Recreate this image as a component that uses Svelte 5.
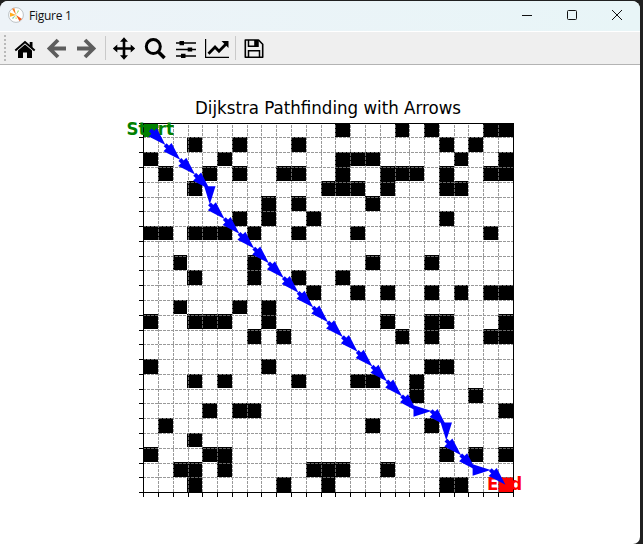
<script>
  const xs = [143,158,173,188,202,217,232,247,261,276,291,306,321,335,350,365,380,395,409,424,439,454,468,483,498,513];
  const ys = [123,137,152,167,182,197,211,226,241,256,270,285,300,315,330,344,359,374,389,403,418,433,448,463,477,492];
  const cellX = xs.map((x, i) => (i === 3 ? 187 : x));
  const cellY = [123,137,152,166,181,196,211,226,240,255,270,285,300,314,329,344,359,374,388,403,418,433,447,462,477,492];
  const walls = [
    [13,17,19,23,24], [3,6,10,20,22], [0,5,13,14,15,21,24],
    [1,4,6,9,10,13,16,17,18,20,23,24], [3,12,13,14,16,20,21],
    [8,10,15], [6,8,11,20], [0,1,3,4,5,7,10,14,23], [],
    [2,7,15,19], [3,7,10,13], [11,14,16,19,21,23,24], [2,6,8],
    [0,3,4,5,8,16,19,20,24], [7,9,17,19,23,24], [], [0,8,19,20],
    [3,5,10,14,15,18], [18,22], [4,6,7,24], [1,15,19], [3],
    [0,4,5,20,22,24], [2,3,5,11,12,13,16], [3,9,12,20,21]
  ];
  const cells = walls.flatMap((row, r) => row.map((c) => ({ r, c })));
  const path = [[0,0],[1,1],[2,2],[3,3],[4,4],[4,5]];
  for (let i = 5; i <= 18; i++) path.push([i, i + 1]);
  path.push([19,19],[20,20],[20,21],[21,22],[22,23],[23,23],[24,24]);
  const px = (c) => 150.7 + c * 14.78;
  const py = (r) => 130.3 + r * 14.77;
  const arrows = path.slice(1).map(([c, r], i) => {
    const [pc, pr] = path[i];
    const dx = px(c) - px(pc), dy = py(r) - py(pr);
    return { x: px(c), y: py(r), len: Math.hypot(dx, dy), angle: Math.atan2(dy, dx) * 180 / Math.PI };
  });
</script>

<div class="desktop">
  <div class="window">
    <header>
      <svg class="logo" width="16" height="16" viewBox="0 0 16 16">
        <circle cx="8" cy="8" r="7.4" fill="#fff" stroke="#aeb4b8" stroke-width=".8"/>
        <path d="M8 8 4 1.800 6.400 1.200Z" fill="#f47b20"/>
        <path d="M8 8 2 5.500 2 9.800Z" fill="#ffae21"/>
        <path d="M8 8 4 11 5 12Z" fill="#75c8b0"/>
        <path d="M8 8 11.400 14 14 12Z" fill="#ee5b1d"/>
        <path d="M8 8 10 3 11 4Z" fill="#9ddd76"/>
        <path d="M8 8 7.300 12 9 12Z" fill="#dff27c"/>
      </svg>
      <span class="name">Figure 1</span>
      <div class="controls">
        <svg width="12" height="12" viewBox="0 0 12 12"><path d="M1 6.500H11"/></svg>
        <svg width="12" height="12" viewBox="0 0 12 12"><rect x="1.500" y="1.500" width="9" height="9" rx="1"/></svg>
        <svg width="12" height="12" viewBox="0 0 12 12"><path d="M1 1 11 11M11 1 1 11"/></svg>
      </div>
    </header>
    <nav>
      <svg width="270" height="32" viewBox="0 32 270 32">
        <path d="M5 35V62" stroke="#b9b9b9" stroke-width="2" stroke-dasharray="2 2"/>
        <path d="M105.500 36V60M235.500 36V60" stroke="#c9c9c9"/>
        <path d="M15.300 50.500 25 42 34.700 50.500" fill="none" stroke="#000" stroke-width="2"/>
        <path d="M29.700 42H32.500V48L29.700 45.500ZM18 50.500 25 44.500 32 50.500V58H27V52.500H23V58H18Z"/>
        <g fill="none" stroke="#5d5d5d" stroke-width="3.800"><path d="M58 40 49.500 48.500 58 57M50 48.500H66"/><path d="M85 40 93.500 48.500 85 57M77 48.500H93"/></g>
        <path d="M124 40V57M115.500 48.500H132.500" stroke="#000" stroke-width="2.600"/>
        <path d="M124 37.300 128 41.800H120ZM124 59.700 128 55.200H120ZM112.800 48.500 117.300 44.500V52.500ZM135.200 48.500 130.700 44.500V52.500Z"/>
        <circle cx="153.300" cy="46.600" r="7" fill="none" stroke="#000" stroke-width="3"/>
        <path d="M158 51.500 164.500 58" stroke="#000" stroke-width="3.600"/>
        <path d="M176 43H196M176 49.500H196M176 56H196" stroke="#000" stroke-width="1.500"/>
        <path d="M179.500 41H184V45.200H179.500ZM187.700 47.400H192.200V51.600H187.700ZM181 53.800H185.500V58H181Z"/>
        <path d="M205.600 39V57.300H229" fill="none" stroke="#000" stroke-width="1.200"/>
        <path d="M208.500 53.700 215 47 219 51.300 226.500 43.500" fill="none" stroke="#000" stroke-width="2.800"/>
        <path d="M221.500 41H228.500V48Z"/>
        <path d="M245.300 40H258.500L262.700 44.200V57.300H245.300Z" fill="none" stroke="#000" stroke-width="1.600" stroke-linejoin="round"/>
        <path d="M248.500 40V46.300H258V40M248.500 57V50.700H259.500V57" fill="none" stroke="#000" stroke-width="1.500"/>
        <path d="M254.200 40H258V46H254.200Z"/>
      </svg>
    </nav>
    <main>
      <svg width="640" height="479" viewBox="0 65 640 479">
        <text class="title" transform="translate(328 114) scale(1 1.080)" text-anchor="middle" textLength="266">Dijkstra Pathfinding with Arrows</text>
        <g shape-rendering="crispEdges">
          <rect x="143" y="123" width="15" height="14" fill="#008000"/>
          <rect x="498" y="477" width="15" height="15" fill="#f00"/>
          {#each cells as { r, c }}
            <rect x={cellX[c]} y={cellY[r]} width={cellX[c + 1] - cellX[c]} height={cellY[r + 1] - cellY[r]}/>
          {/each}
          <g class="grid">
            {#each xs.slice(1, -1) as x}<path d={`M${x + .5} 492V123`}/>{/each}
            {#each ys.slice(1, -1) as y}<path d={`M143 ${y + .5}H513`}/>{/each}
          </g>
          <g stroke="#000">
            {#each xs as x}<path d={`M${x + .5} 492V497`}/>{/each}
            {#each ys as y}<path d={`M139 ${y + .5}H143`}/>{/each}
            <rect x="143.500" y="123.500" width="370" height="369" fill="none"/>
          </g>
        </g>
        <text class="mark" transform="translate(150.300 135) scale(1 1.070)" fill="#008000" text-anchor="middle">Start</text>
        <text class="mark" transform="translate(504.700 490) scale(1 1.070)" fill="#f00" text-anchor="middle">End</text>
        {#each arrows as a}
          <g transform={`translate(${a.x} ${a.y}) rotate(${a.angle})`} fill="#00f">
            <path d="M0 0-18-5.700V5.700Z"/>
            {#if a.len > 18}<path d={`M${-a.len - .5}-2H-16V2H${-a.len - .5}Z`}/>{/if}
          </g>
        {/each}
      </svg>
    </main>
  </div>
</div>

<style>
  .desktop { width: 643px; height: 544px; box-sizing: border-box; padding: 1px 3px 0 0; background: #202020; overflow: hidden; }
  .window { height: 543px; display: flex; flex-direction: column; background: #fff; border-radius: 8px 8px 7px 0; overflow: hidden; }
  header { height: 28px; display: flex; align-items: center; padding: 0 17px 2px 8px; background: linear-gradient(90deg, #edf3f8, #e8f5f7); border-bottom: 1px solid #fff; }
  .name { font: 12px "Open Sans", "Noto Sans", sans-serif; color: #111; margin-left: 5px; letter-spacing: -.25px; }
  .controls { margin-left: auto; display: flex; gap: 33.5px; }
  .controls svg { fill: none; stroke: #111; stroke-width: 1; }
  .controls svg:first-child { margin-right: -.5px; }
  nav { height: 32px; background: #efefef; border-bottom: 1px solid #b3b3b3; }
  svg { display: block; flex: none; }
  main { flex: 1; }
  .title { font: 16.67px "DejaVu Sans", sans-serif; }
  .mark { font: bold 16.67px "DejaVu Sans", sans-serif; }
  .grid { stroke: #808080; stroke-width: 1; stroke-dasharray: 3 1; opacity: .8; }
</style>
